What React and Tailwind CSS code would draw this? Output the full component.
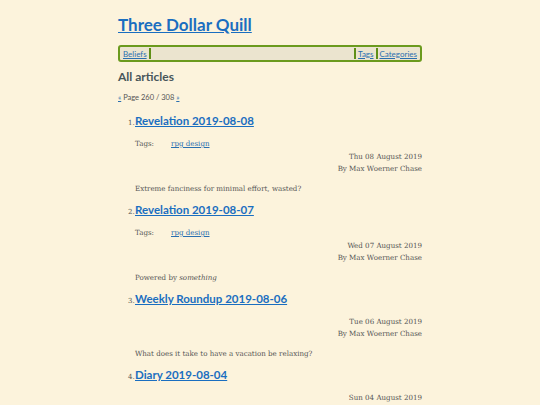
import React from 'react';

const posts = [
    {
        title: 'Revelation 2019-08-08',
        tags: ['rpg design'],
        date: 'Thu 08 August 2019',
        summary: <>Extreme fanciness for minimal effort, wasted?</>,
    },
    {
        title: 'Revelation 2019-08-07',
        tags: ['rpg design'],
        date: 'Wed 07 August 2019',
        summary: <>Powered by <em>something</em></>,
    },
    {
        title: 'Weekly Roundup 2019-08-06',
        tags: [],
        date: 'Tue 06 August 2019',
        summary: <>What does it take to have a vacation be relaxing?</>,
    },
    {
        title: 'Diary 2019-08-04',
        tags: [],
        date: 'Sun 04 August 2019',
        summary: null,
    },
];

const sans = "font-['Lato','Open_Sans',sans-serif]";
const serif = "font-['DejaVu_Serif',serif]";

const App = () => {
    return (
        <div className="min-h-screen bg-[#fcf3dc] overflow-hidden">
            <div className="w-[304px] mx-auto pt-[15px]">
                <h1 className={`${sans} text-[17px] font-bold leading-[20px]`}>
                    <a href="#" className="text-[#1a6ec0] underline">Three Dollar Quill</a>
                </h1>

                {/* Nav bar */}
                <nav className={`${sans} mt-[10px] h-[17px] flex items-center border-2 border-[#6b9a1e] rounded-[3px] bg-[#ebe4cf] px-[2px] text-[8px]`}>
                    <a href="#" className="text-[#2a6fb0] underline px-[1px]">Beliefs</a>
                    <span className="w-[2px] h-[11px] bg-[#5f8f17] ml-[1px]"></span>
                    <span className="flex-1"></span>
                    <span className="w-[2px] h-[11px] bg-[#5f8f17] mr-[1px]"></span>
                    <a href="#" className="text-[#2a6fb0] underline px-[1px]">Tags</a>
                    <span className="w-[2px] h-[11px] bg-[#5f8f17] mx-[1px]"></span>
                    <a href="#" className="text-[#2a6fb0] underline px-[1px]">Categories</a>
                </nav>

                <h2 className={`${sans} mt-[7px] text-[12px] font-bold text-[#48565a] leading-[16px]`}>All articles</h2>

                <p className={`${sans} mt-[8px] text-[7.5px] text-[#555] leading-[10px]`}>
                    <a href="#" className="text-[#2a6fb0] underline">«</a> Page 260 / 308{' '}
                    <a href="#" className="text-[#2a6fb0] underline">»</a>
                </p>

                <ol className="mt-[9px] pl-[17px]">
                    {posts.map((post, i) => (
                        <li key={post.title} className="mb-[6px]">
                            <div className="flex items-baseline h-[18px]">
                                <span className={`${serif} text-[7px] text-[#555] w-[7px] -ml-[7px]`}>{i + 1}.</span>
                                <a href="#" className={`${sans} text-[11.5px] font-bold text-[#1a6ec0] underline leading-[18px]`}>
                                    {post.title}
                                </a>
                            </div>

                            <div className={`${serif} text-[7.1px] text-[#555] leading-[12px]`}>
                                {post.tags.length > 0 && (
                                    <div className="flex mt-[8px]">
                                        <span className="w-[36px]">Tags:</span>
                                        {post.tags.map((t) => (
                                            <a key={t} href="#" className="text-[#2a6fb0] underline">{t}</a>
                                        ))}
                                    </div>
                                )}
                                <div className={`text-right ${post.tags.length ? 'mt-[1px]' : 'mt-[8px]'}`}>
                                    <div>{post.date}</div>
                                    <div>By Max Woerner Chase</div>
                                </div>
                                {post.summary && <p className="mt-[8px]">{post.summary}</p>}
                            </div>
                        </li>
                    ))}
                </ol>
            </div>
        </div>
    );
};

export default App;
